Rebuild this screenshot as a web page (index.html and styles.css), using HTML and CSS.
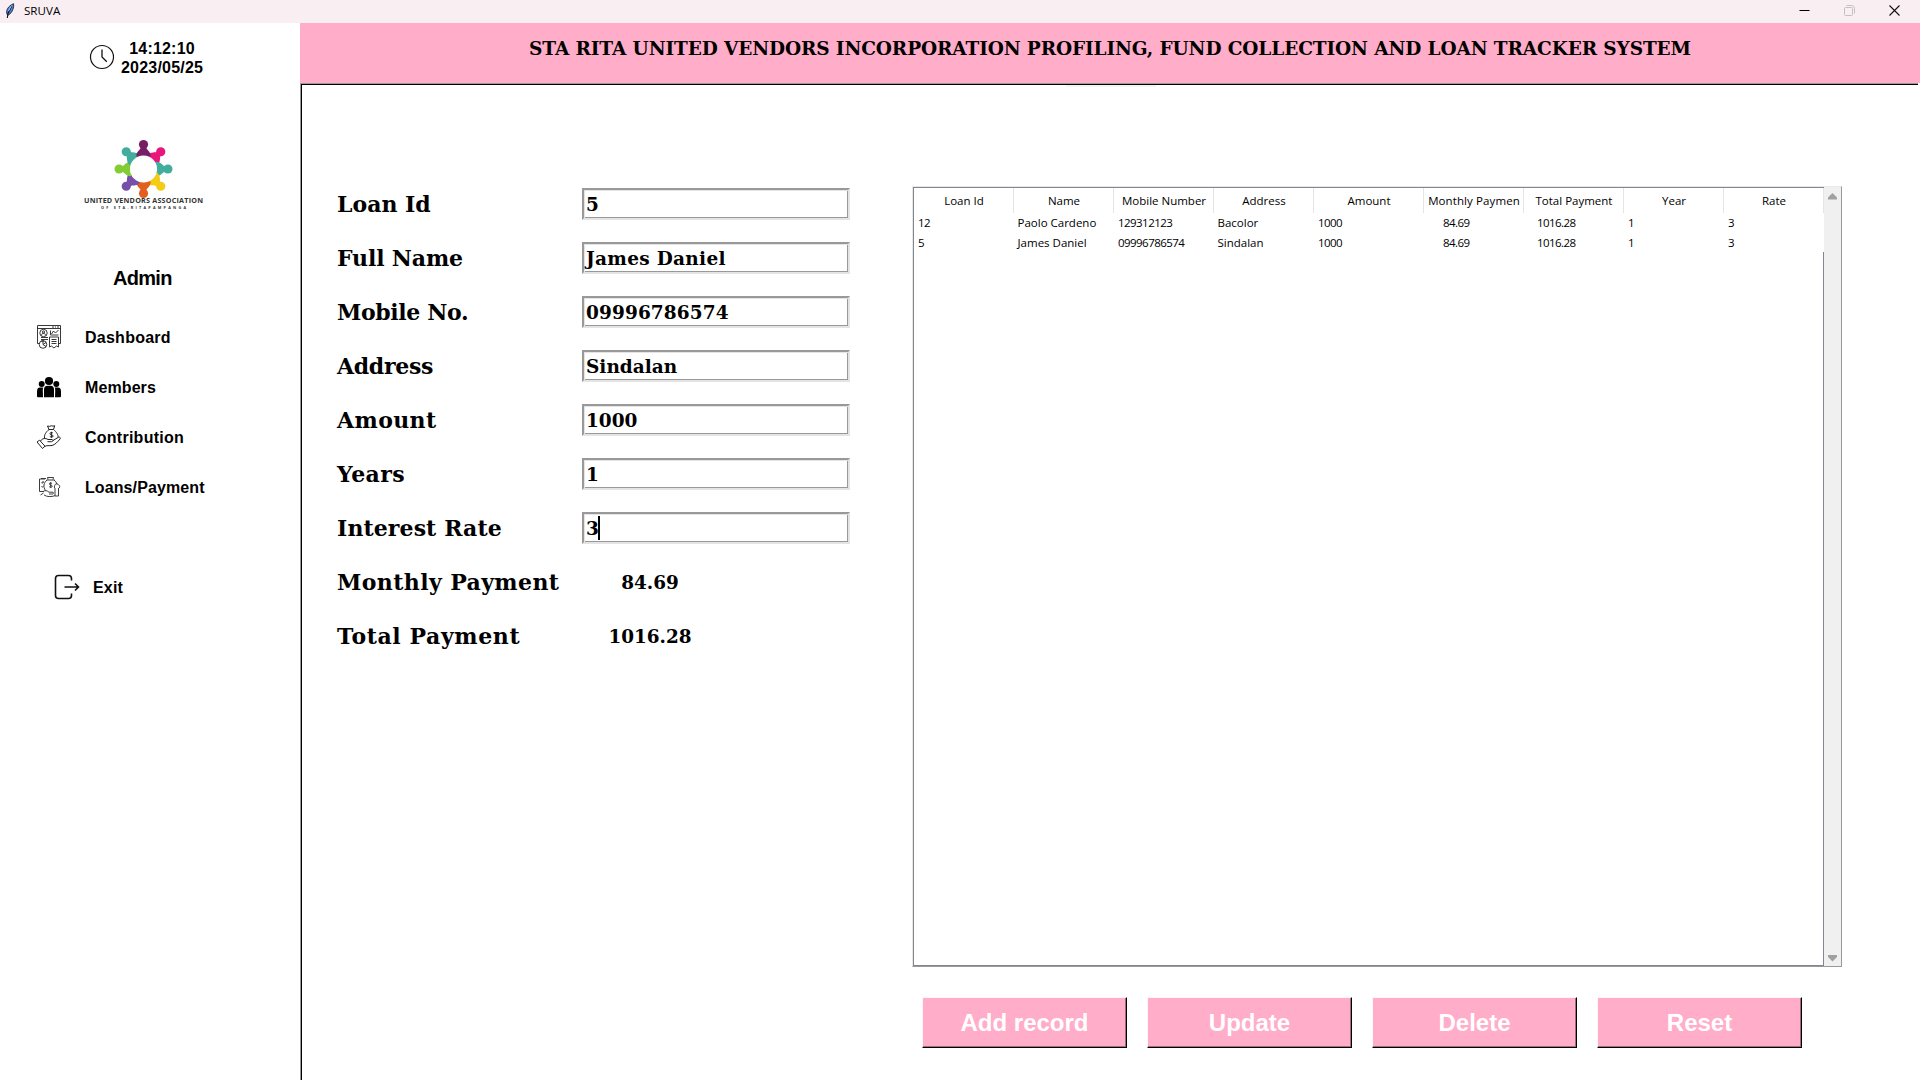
FILE: index.html
```html
<!DOCTYPE html>
<html lang="en">
<head>
<meta charset="utf-8">
<title>SRUVA</title>
<link rel="stylesheet" href="styles.css">
</head>
<body>
<header class="titlebar">
  <svg class="feather" width="10" height="16" viewBox="0 0 10 16"><path d="M2.500 12C0 8 3 3 8.500.7 9.300 4 7.500 9.500 3.500 12Z" fill="#4f86cf" stroke="#1a2440" stroke-width=".9"/><path d="M6.800 3 3 10.500 2.300 15" fill="none" stroke="#111" stroke-width="1.100"/><path d="M6.500 2.500 3.500 8" stroke="#a9cdf5" stroke-width="1"/></svg>
  <span class="app-name">SRUVA</span>
  <div class="controls">
    <svg width="11" height="11" viewBox="0 0 11 11"><path d="M.5 5.500h10" stroke="#000"/></svg>
    <svg width="11" height="11" viewBox="0 0 11 11"><path d="M2.500.5h5a3 3 0 0 1 3 3v5M1.500 2.500h6a1 1 0 0 1 1 1v6a1 1 0 0 1-1 1h-6a1 1 0 0 1-1-1v-6a1 1 0 0 1 1-1z" fill="none" stroke="#c5bfc2"/></svg>
    <svg width="11" height="11" viewBox="0 0 11 11"><path d="M.5.5l10 10M10.500.5l-10 10" stroke="#111" stroke-width="1.100"/></svg>
  </div>
</header>
<div class="window">
  <aside class="sidebar">
    <div class="clock">
      <svg width="26" height="26" viewBox="0 0 26 26"><circle cx="13" cy="13" r="11.500" fill="none" stroke="#111" stroke-width="1.200"/><path d="M13 5.500V13l4.800 4.800" fill="none" stroke="#111" stroke-width="1.300"/></svg>
      <div class="stamp"><span class="time">14:12:10</span><span>2023/05/25</span></div>
    </div>
    <div class="logo">
      <svg width="124" height="74" viewBox="0 0 124 74">
        <defs><g id="person"><circle cx="0" cy="-24.400" r="4.600"/><path d="M-2.600-22h5.200c0 2.500 4.600 4 4.600 9.500L0-11-7.200-12.500c0-5.500 4.600-7 4.600-9.500z"/></g></defs>
        <g transform="translate(62.5 32)">
          <use href="#person" fill="#e8177a" transform="rotate(45)"/><use href="#person" fill="#41ae9d" transform="rotate(90)"/><use href="#person" fill="#f3cc15" transform="rotate(135)"/><use href="#person" fill="#e2601f" transform="rotate(180)"/><use href="#person" fill="#774fa9" transform="rotate(225)"/><use href="#person" fill="#82cc34" transform="rotate(270)"/><use href="#person" fill="#41ae9d" transform="rotate(315)"/><use href="#person" fill="#771f66"/>
          <circle r="13.600" fill="#fff"/>
        </g>
        <text x="62.5" y="66" class="logo-name" textLength="119">UNITED VENDORS ASSOCIATION</text>
        <text x="62.5" y="72" class="logo-sub" textLength="85">OF STA.RITAPAMPANGA</text>
      </svg>
    </div>
    <div class="role">Admin</div>
    <nav class="menu">
      <a class="item dashboard"><svg width="24" height="24" viewBox="0 0 24 24" fill="none" stroke="#222" stroke-width=".9"><path d="M.5 18.500V.5h23v18h-2M.5 3.500h23M15 2h2M18 2h1M20 2h2M.5 18.500h2M13.500 5.500v4.500h8M14.500 9l2-3 2 2 3-3M4 12.500h7M4 14.500h7M4 16h3"/><circle cx="6.500" cy="8" r="3.700"/><path d="M4.500 10.500c0-3 4-3 4 0"/><circle cx="6.500" cy="7" r="1.100"/><circle cx="6" cy="19.500" r="3.800"/><path d="M6 15.500v4l3 2M6 19.500l3-2M12.500 12h9v10l-2-1-2.500 2-2.500-2-2 1zM14.500 14.500h5M14.500 16.500h5M14.500 18.500h5"/></svg><span>Dashboard</span></a>
      <a class="item members"><svg width="24" height="24" viewBox="0 0 24 24"><circle cx="12" cy="6" r="4.100"/><circle cx="4.700" cy="8.900" r="3"/><circle cx="19.300" cy="8.900" r="3"/><path d="M7 22.200v-7.500q0-4 3.500-4h3q3.500 0 3.500 4v7.500zM6 22.200H1q-1 0-1-1v-4.500q0-4.200 3-4.200h3.200q-.5 1.200-.4 3zM18 22.200h5q1 0 1-1v-4.500q0-4.200-3-4.200h-3.200q.5 1.200.4 3z"/></svg><span>Members</span></a>
      <a class="item contribution"><svg width="24" height="24" viewBox="0 0 24 24" fill="none" stroke="#222"><path d="M12 4.500 10.500 1l2 .4L14.500.7l1.500.5 1.700-.5L16.500 4.500zM12 4.500C9 7 7 10 7.500 13M16.500 4.500c3 2.500 5 5.500 4.500 8M0 17l2.500-1.800 5.500 6L5.500 23.500zM3.500 16c2-3 5-3 7.500-1.500h4c1.500.5 1.200 2-.5 2.200H10.500M16 15.500l5.500-3.300c1.500-.5 2.400.8 1.500 1.800-2.500 3-5 5.800-8 6.500-3 .5-5-.5-7.500 1"/><path d="M16 8.200c-1-1.200-3.500-.8-3 .8.400 1.300 3 .5 3.100 2 .1 1.400-2.300 1.500-3.300.3M14.400 6.800v6"/></svg><span>Contribution</span></a>
      <a class="item loans"><svg width="24" height="24" viewBox="0 0 24 24" fill="none" stroke="#333" stroke-width=".95"><path d="M8 4H2.500v12.500H7M4 3.500h5M5 7h2M4.500 7.500l.8.800 1.200-1.500M4.500 11.500l.8.800 1.200-1.500M11 4.500 10.500 2.500h6l-.5 2M9.500 5h8M10 5C6.500 8 6 12 8.500 15.500M17 5c1.500 1 2.500 2.500 3 4.500M6 16.500c2-1.500 4-1 6 .7h4c1 .8.500 1.800-1 1.800h-3M7 20c3 2 7 2 11 .7M18 13v8h3.500v-8M17.500 13c-.5-3 1.500-5 3-4s3 2 1.800 4M3.500 20l3-2"/><path d="M15 8.500c-1-1-3-.8-2.600.7.300 1.200 2.700.6 2.800 2 .1 1.300-2 1.500-3 .4M13.700 7.300v5.400"/></svg><span>Loans/Payment</span></a>
    </nav>
    <a class="exit"><svg width="26" height="26" viewBox="0 0 26 26" fill="none" stroke="#111" stroke-width="1.600"><path d="M17.500 6.500V4.500Q17.500 1.500 14.500 1.500H4.500Q1.500 1.500 1.500 4.500v17q0 3 3 3h10q3 0 3-3v-2M10.500 13h14M21 9.500 24.500 13l-3.500 3.500"/></svg><span>Exit</span></a>
  </aside>
  <main class="content">
    <div class="banner"><h1>STA RITA UNITED VENDORS INCORPORATION PROFILING, FUND COLLECTION AND LOAN TRACKER SYSTEM</h1></div>
    <div class="workspace">
      <section class="form">
        <div class="row"><label>Loan Id</label><div class="field">5</div></div>
        <div class="row"><label class="name">Full Name</label><div class="field wide">James Daniel</div></div>
        <div class="row"><label class="mobile">Mobile No.</label><div class="field digits">09996786574</div></div>
        <div class="row"><label class="address">Address</label><div class="field">Sindalan</div></div>
        <div class="row"><label class="amount">Amount</label><div class="field">1000</div></div>
        <div class="row"><label class="amount">Years</label><div class="field">1</div></div>
        <div class="row"><label class="rate">Interest Rate</label><div class="field active">3</div></div>
        <div class="row"><label class="monthly">Monthly Payment</label><output>84.69</output></div>
        <div class="row"><label class="total">Total Payment</label><output>1016.28</output></div>
      </section>
      <section class="records">
        <div class="list">
          <div class="grid">
            <div class="line head"><span>Loan Id</span><span>Name</span><span>Mobile Number</span><span>Address</span><span>Amount</span><span class="clip">Monthly Paymen</span><span>Total Payment</span><span>Year</span><span>Rate</span></div>
            <div class="line"><span class="num">12</span><span>Paolo Cardeno</span><span class="num">129312123</span><span>Bacolor</span><span class="num">1000</span><span class="num c-month">84.69</span><span class="num c-total">1016.28</span><span class="num">1</span><span class="num">3</span></div>
            <div class="line"><span class="num">5</span><span>James Daniel</span><span class="num">09996786574</span><span>Sindalan</span><span class="num">1000</span><span class="num c-month">84.69</span><span class="num c-total">1016.28</span><span class="num">1</span><span class="num">3</span></div>
            <div class="empty"></div>
          </div>
          <div class="scroll">
            <svg width="9" height="7" viewBox="0 0 9 7"><path d="M4.500 0 9 4.500V6.500H0V4.500z" fill="#a0a0a0"/></svg>
            <svg width="9" height="7" viewBox="0 0 9 7"><path d="M4.500 6.500 9 2V0H0V2z" fill="#a0a0a0"/></svg>
          </div>
        </div>
        <div class="actions"><button>Add record</button><button>Update</button><button>Delete</button><button>Reset</button></div>
      </section>
    </div>
  </main>
</div>
</body>
</html>
```
FILE: styles.css
```css
* { box-sizing: border-box; }
body { margin: 0; width: 1920px; height: 1080px; overflow: hidden; background: #fff; color: #000; font-family: "Liberation Sans", Arial, sans-serif; }
svg { display: block; flex: none; }

.titlebar { display: flex; align-items: center; height: 23px; padding: 0 20px 2px 5px; background: #f9eff3; font: 11.6px/20px "Open Sans", "Noto Sans", sans-serif; }
.app-name { margin: 1px 0 0 9px; }
.controls { display: flex; gap: 34px; margin-left: auto; }

.window { display: flex; height: 1057px; }
.sidebar { width: 300px; font-weight: 700; font-size: 16px; }
.clock { display: flex; height: 70px; padding: 16px 0 0 89px; gap: 6px; }
.clock svg { margin-top: 5px; }
.stamp { display: flex; flex-direction: column; align-items: center; line-height: 19px; letter-spacing: .2px; }
.logo { margin: 44px 0 0 81px; }
.logo-name, .logo-sub { font-family: "Open Sans", sans-serif; font-weight: 700; text-anchor: middle; fill: #333; }
.logo-name { font-size: 7.2px; }
.logo-sub { font-size: 3.800px; }
.role { margin: 56px 0 0 113px; font-size: 20px; line-height: 22px; letter-spacing: -.7px; }
.menu { display: flex; flex-direction: column; margin-top: 23px; }
.item { display: flex; align-items: center; height: 50px; padding-left: 37px; gap: 24px; letter-spacing: .1px; }
.item span, .exit span { padding-top: 2px; }
.dashboard { letter-spacing: .25px; }
.contribution { letter-spacing: .25px; }
.exit { display: flex; align-items: center; gap: 12px; height: 50px; margin: 50px 0 0 54px; }
.exit span { padding-left: 1px; letter-spacing: .2px; }

.content { display: flex; flex-direction: column; width: 1620px; }
.banner { position: relative; height: 60px; background: #ffadc8; text-align: center; }
.banner::after { content: ""; position: absolute; left: 766px; top: 62px; width: 90px; height: 2px; background: #f4f4f4; }
.banner h1 { margin: 0; padding-top: 15px; font: bold 18.5px/22px "DejaVu Serif", serif; letter-spacing: -.1px; white-space: nowrap; }
.workspace { display: flex; flex: 1; width: 1618px; border-left: 1px solid #999; border-top: 1px solid #999; box-shadow: inset 1px 1px #000; padding: 102px 0 0 36px; }

.form { width: 575px; flex: none; padding-top: 2px; }
.row { display: flex; align-items: center; height: 32px; margin-bottom: 22px; font-family: "DejaVu Serif", serif; font-weight: bold; }
.row label { width: 245px; font-size: 22px; white-space: nowrap; }
.row .name { letter-spacing: -.15px; }
.row .mobile { letter-spacing: -.35px; }
.row .address { letter-spacing: -.3px; }
.row .amount { letter-spacing: .4px; }
.row .rate { letter-spacing: .1px; }
.row .monthly { letter-spacing: .4px; }
.row .total { letter-spacing: .6px; }
.field { display: flex; align-items: center; width: 268px; height: 32px; padding-left: 2px; border: 2px solid; border-color: #999 #e4e4e4 #e4e4e4 #999; box-shadow: inset 1px 1px #e4e4e4, inset -1px -1px #999; font-size: 18.5px; }
.wide { letter-spacing: .3px; }
.digits { letter-spacing: .1px; }
.active::after { content: ""; width: 2px; height: 24px; background: #000; margin-left: -1px; }
.row output { width: 136px; text-align: center; font-size: 18.4px; }

.list { display: flex; width: 930px; height: 781px; border: 1px solid; border-color: #e8e8e8 #999 #999 #e8e8e8; }
.grid { display: flex; flex-direction: column; width: 911px; border-left: 1px solid #82868e; border-top: 1px solid #82868e; border-bottom: 1px solid #82868e; font: 11.5px/20px "Open Sans", "Noto Sans", sans-serif; }
.line { display: grid; grid-template-columns: repeat(4, 100px) 110px repeat(4, 100px); height: 20px; }
.line span { padding-left: 3.500px; white-space: nowrap; overflow: hidden; }
.line .num { padding-left: 4px; letter-spacing: -.55px; }
.line .c-month { padding-left: 19px; }
.line .c-total { padding-left: 13px; }
.line.head { height: 25px; line-height: 25px; }
.line.head span { padding: 0 0 0 1px; text-align: center; border-right: 1px solid #e4e4e4; }
.head .clip { letter-spacing: .1px; }
.empty { flex: 1; margin-top: -1px; border-right: 1px solid #82868e; }
.scroll { display: flex; flex-direction: column; justify-content: space-between; align-items: center; width: 17px; padding: 6px 0 4px; background: #f0f0f0; }

.actions { display: flex; gap: 20px; margin: 30px 0 0 10px; }
.actions button { width: 205px; height: 51px; padding: 1px 0 0; border: 1px solid; border-color: #fff5f8 #000 #000 #fff5f8; border-radius: 0; background: #ffadc8; box-shadow: inset -1px -1px #9e6c7c; color: #fff; font: bold 24px "Liberation Sans", Arial, sans-serif; }
```
